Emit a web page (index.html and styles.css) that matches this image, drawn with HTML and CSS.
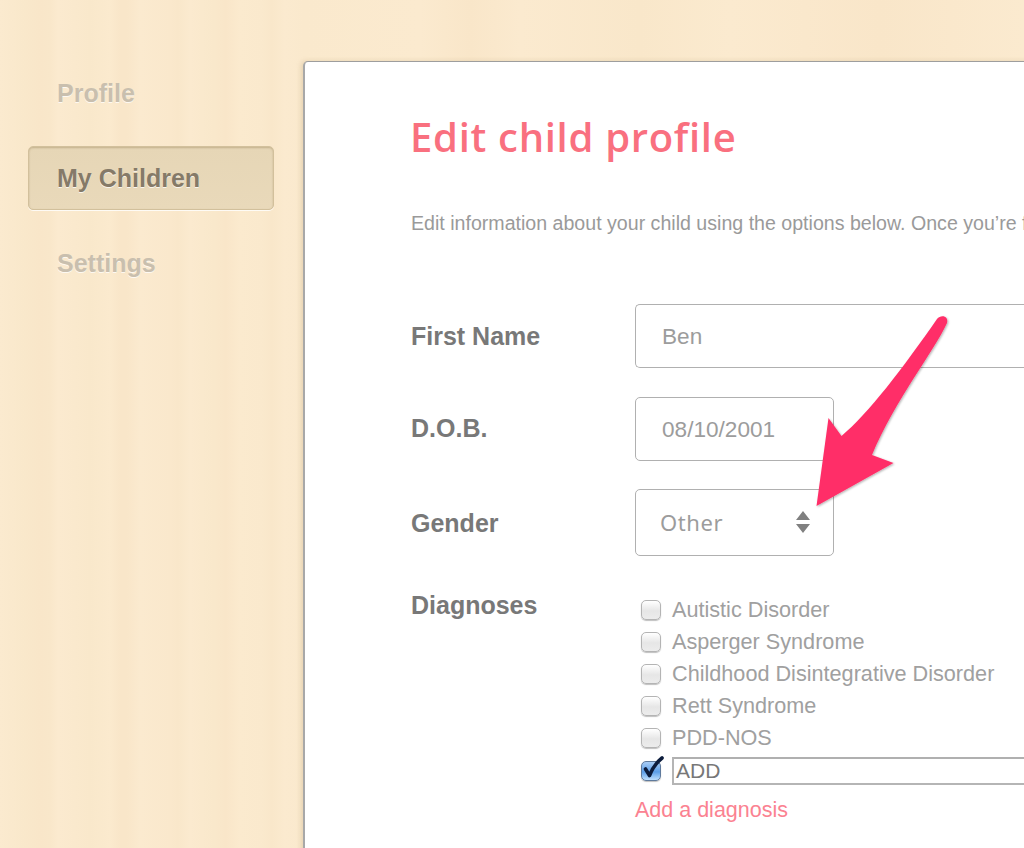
FILE: index.html
```html
<!DOCTYPE html>
<html lang="en">
<head>
<meta charset="utf-8">
<title>Edit child profile</title>
<link rel="stylesheet" href="styles.css">
</head>
<body>
<div class="page">
  <nav class="sidebar">
    <a class="nav-item">Profile</a>
    <a class="nav-item active">My Children</a>
    <a class="nav-item">Settings</a>
  </nav>
  <main class="panel">
    <h1 class="title">Edit child profile</h1>
    <p class="intro">Edit information about your child using the options below. Once you’re finished, click the save button at the bottom.</p>
    <form class="form">
      <div class="row row-name">
        <label class="label">First Name</label>
        <div class="field field-wide">Ben</div>
      </div>
      <div class="row row-dob">
        <label class="label">D.O.B.</label>
        <div class="field field-short">08/10/2001</div>
      </div>
      <div class="row row-gender">
        <label class="label">Gender</label>
        <div class="field field-short select">
          <span class="select-value">Other</span>
          <svg class="updown" width="14" height="22" viewBox="0 0 14 22"><path d="M7 0l7 9H0z M0 13h14l-7 9z" fill="#808080"/></svg>
        </div>
      </div>
      <div class="row row-diag">
        <label class="label">Diagnoses</label>
        <div class="diag">
          <div class="check"><span class="box"></span><span>Autistic Disorder</span></div>
          <div class="check"><span class="box"></span><span>Asperger Syndrome</span></div>
          <div class="check"><span class="box"></span><span>Childhood Disintegrative Disorder</span></div>
          <div class="check"><span class="box"></span><span>Rett Syndrome</span></div>
          <div class="check"><span class="box"></span><span>PDD-NOS</span></div>
          <div class="check check-other">
            <span class="box checked"><svg class="tick" width="24" height="26" viewBox="0 0 24 26"><path d="M5.500 14L9.500 20.500C12 14 16 8 22 3" fill="none" stroke="#0c1c3c" stroke-width="3.600" stroke-linecap="round" stroke-linejoin="round"/></svg></span>
            <div class="other-input">ADD</div>
          </div>
          <a class="add-link">Add a diagnosis</a>
        </div>
      </div>
    </form>
  </main>
  <svg class="arrow" width="1024" height="848" viewBox="0 0 1024 848">
    <defs>
      <filter id="arrow-shadow" x="-20%" y="-20%" width="140%" height="140%">
        <feDropShadow dx="1" dy="1" stdDeviation="1" flood-color="#000" flood-opacity="0.3"/>
      </filter>
    </defs>
    <path d="M816.500 506 L828.500 418 L841.500 436 C868 414 903 368 937 319 C941 314 949 316 947 323 C935 350 895 400 872 455 L893.500 463 Z" fill="#ff2f68" filter="url(#arrow-shadow)"/>
  </svg>
</div>
</body>
</html>
```
FILE: styles.css
```css
* { box-sizing: border-box; }
html, body { margin: 0; padding: 0; }
body { font-family: "Liberation Sans", Arial, sans-serif; }
.page {
  position: relative;
  width: 1024px;
  height: 848px;
  overflow: hidden;
  display: flex;
  padding: 61px 0 0 0;
  background-color: #fae9cd;
  background-image:
    linear-gradient(90deg,
      #fbeacf 0, #f9e8cb 24px, #f9e6c9 40px, #f9e7ca 50px, #fbeacf 58px,
      #fae9cd 75px, #f9e8cb 90px, #fbeace 110px, #f9e6c9 120px, #f9e6c9 127px,
      #fbeacf 140px, #fae8cc 170px, #f9e7ca 178px, #fbeacf 190px,
      #f9e8cb 214px, #f9e6c9 226px, #fbeace 240px, #fae9cd 262px,
      #f9e7ca 272px, #fbeacf 285px, #fae9cd 304px,
      #fbeacf 420px, #f9e6c9 470px, #fbeacf 520px, #f9e7ca 640px, #fbeacf 730px, #f9e6c9 880px, #fbeacf 1024px);
}
.sidebar {
  width: 303px;
  flex: none;
  padding: 0 29px 0 28px;
  display: flex;
  flex-direction: column;
  gap: 21px;
}
.nav-item {
  height: 64px;
  padding-left: 28px;
  display: flex;
  align-items: center;
  font-size: 25px;
  font-weight: 700;
  color: #c9bfae;
  text-shadow: 0 1px 0 rgba(255,255,255,.75);
  border: 1px solid transparent;
  border-radius: 5px;
}
.nav-item.active {
  color: #857a68;
  background: linear-gradient(180deg, #e6d6b6, #e9d9ba);
  border-color: #d2c09c;
  box-shadow: inset 0 1px 2px rgba(130,105,60,.35), 0 1px 0 rgba(255,255,255,.8);
}
.panel {
  flex: none;
  width: 800px;
  height: 900px;
  background: #fff;
  border-top: 1px solid #9e9e9e;
  border-left: 2px solid #a8a8a8;
  border-radius: 5px 0 0 0;
  padding: 0 0 0 106px;
  box-shadow: -2px 0 5px rgba(160,130,80,.22);
}
.title {
  margin: 50px 0 0 -1px;
  font-family: "Open Sans", "Noto Sans", sans-serif;
  font-size: 40px;
  line-height: 50px;
  font-weight: 600;
  letter-spacing: .7px;
  color: #f9707f;
  white-space: nowrap;
}
.intro {
  margin: 49px 0 0;
  font-size: 19.600px;
  line-height: 24px;
  color: #9a9a9a;
  white-space: nowrap;
  overflow: hidden;
  width: 613px;
}
.form { margin-top: 69px; }
.row {
  display: flex;
  align-items: flex-start;
  margin-bottom: 29px;
}
.label {
  width: 224px;
  flex: none;
  font-size: 25px;
  font-weight: 700;
  color: #787878;
  line-height: 30px;
}
.row-name .label { padding-top: 17px; }
.row-dob .label { padding-top: 16px; }
.row-gender .label { padding-top: 19px; }
.row-diag .label { padding-top: 0; }
.field {
  border: 1px solid #b0b0b0;
  border-radius: 5px;
  height: 64px;
  background: #fff;
  font-size: 22.600px;
  color: #9c9c9c;
  display: flex;
  align-items: center;
  padding: 2px 0 0 26px;
}
.field-wide { width: 420px; border-right: 0; border-radius: 5px 0 0 5px; }
.field-short { width: 199px; }
.select { height: 67px; justify-content: space-between; padding: 0 23px 2px 24px; letter-spacing: .6px; font-family: "Noto Sans", "Open Sans", sans-serif; font-size: 22px; }
.row-dob { margin-bottom: 28px; }
.row-gender { margin-bottom: 34px; }
.diag { display: flex; flex-direction: column; padding: 4px 0 0 6px; }
.check {
  display: flex;
  align-items: center;
  height: 32px;
  gap: 11px;
  font-size: 21.650px;
  color: #a0a0a0;
}
.check-other { margin-top: 1px; }
.box {
  position: relative;
  flex: none;
  width: 20px;
  height: 20px;
  border: 1px solid #b4b4b4;
  border-radius: 5px;
  background: linear-gradient(180deg, #fff, #e6e6e6 55%, #ececec);
  box-shadow: 0 1px 1px rgba(0,0,0,.25);
}
.box.checked {
  background: linear-gradient(180deg, #a9cdf5, #5b9ee8 55%, #bfe0ff);
  border-color: #5f7a9c;
}
.tick { position: absolute; left: -2px; top: -7px; }
.other-input {
  width: 400px;
  height: 28px;
  border-top: 2px solid #b0b0b0;
  border-left: 2px solid #b5b5b5;
  border-bottom: 2px solid #b5b5b5;
  color: #777;
  font-size: 21px;
  line-height: 24px;
  padding-left: 2px;
}
.add-link {
  display: block;
  margin: 11px 0 0 -6px;
  font-size: 21.500px;
  line-height: 25px;
  color: #fb8291;
}
.arrow { position: absolute; left: 0; top: 0; pointer-events: none; }
```
